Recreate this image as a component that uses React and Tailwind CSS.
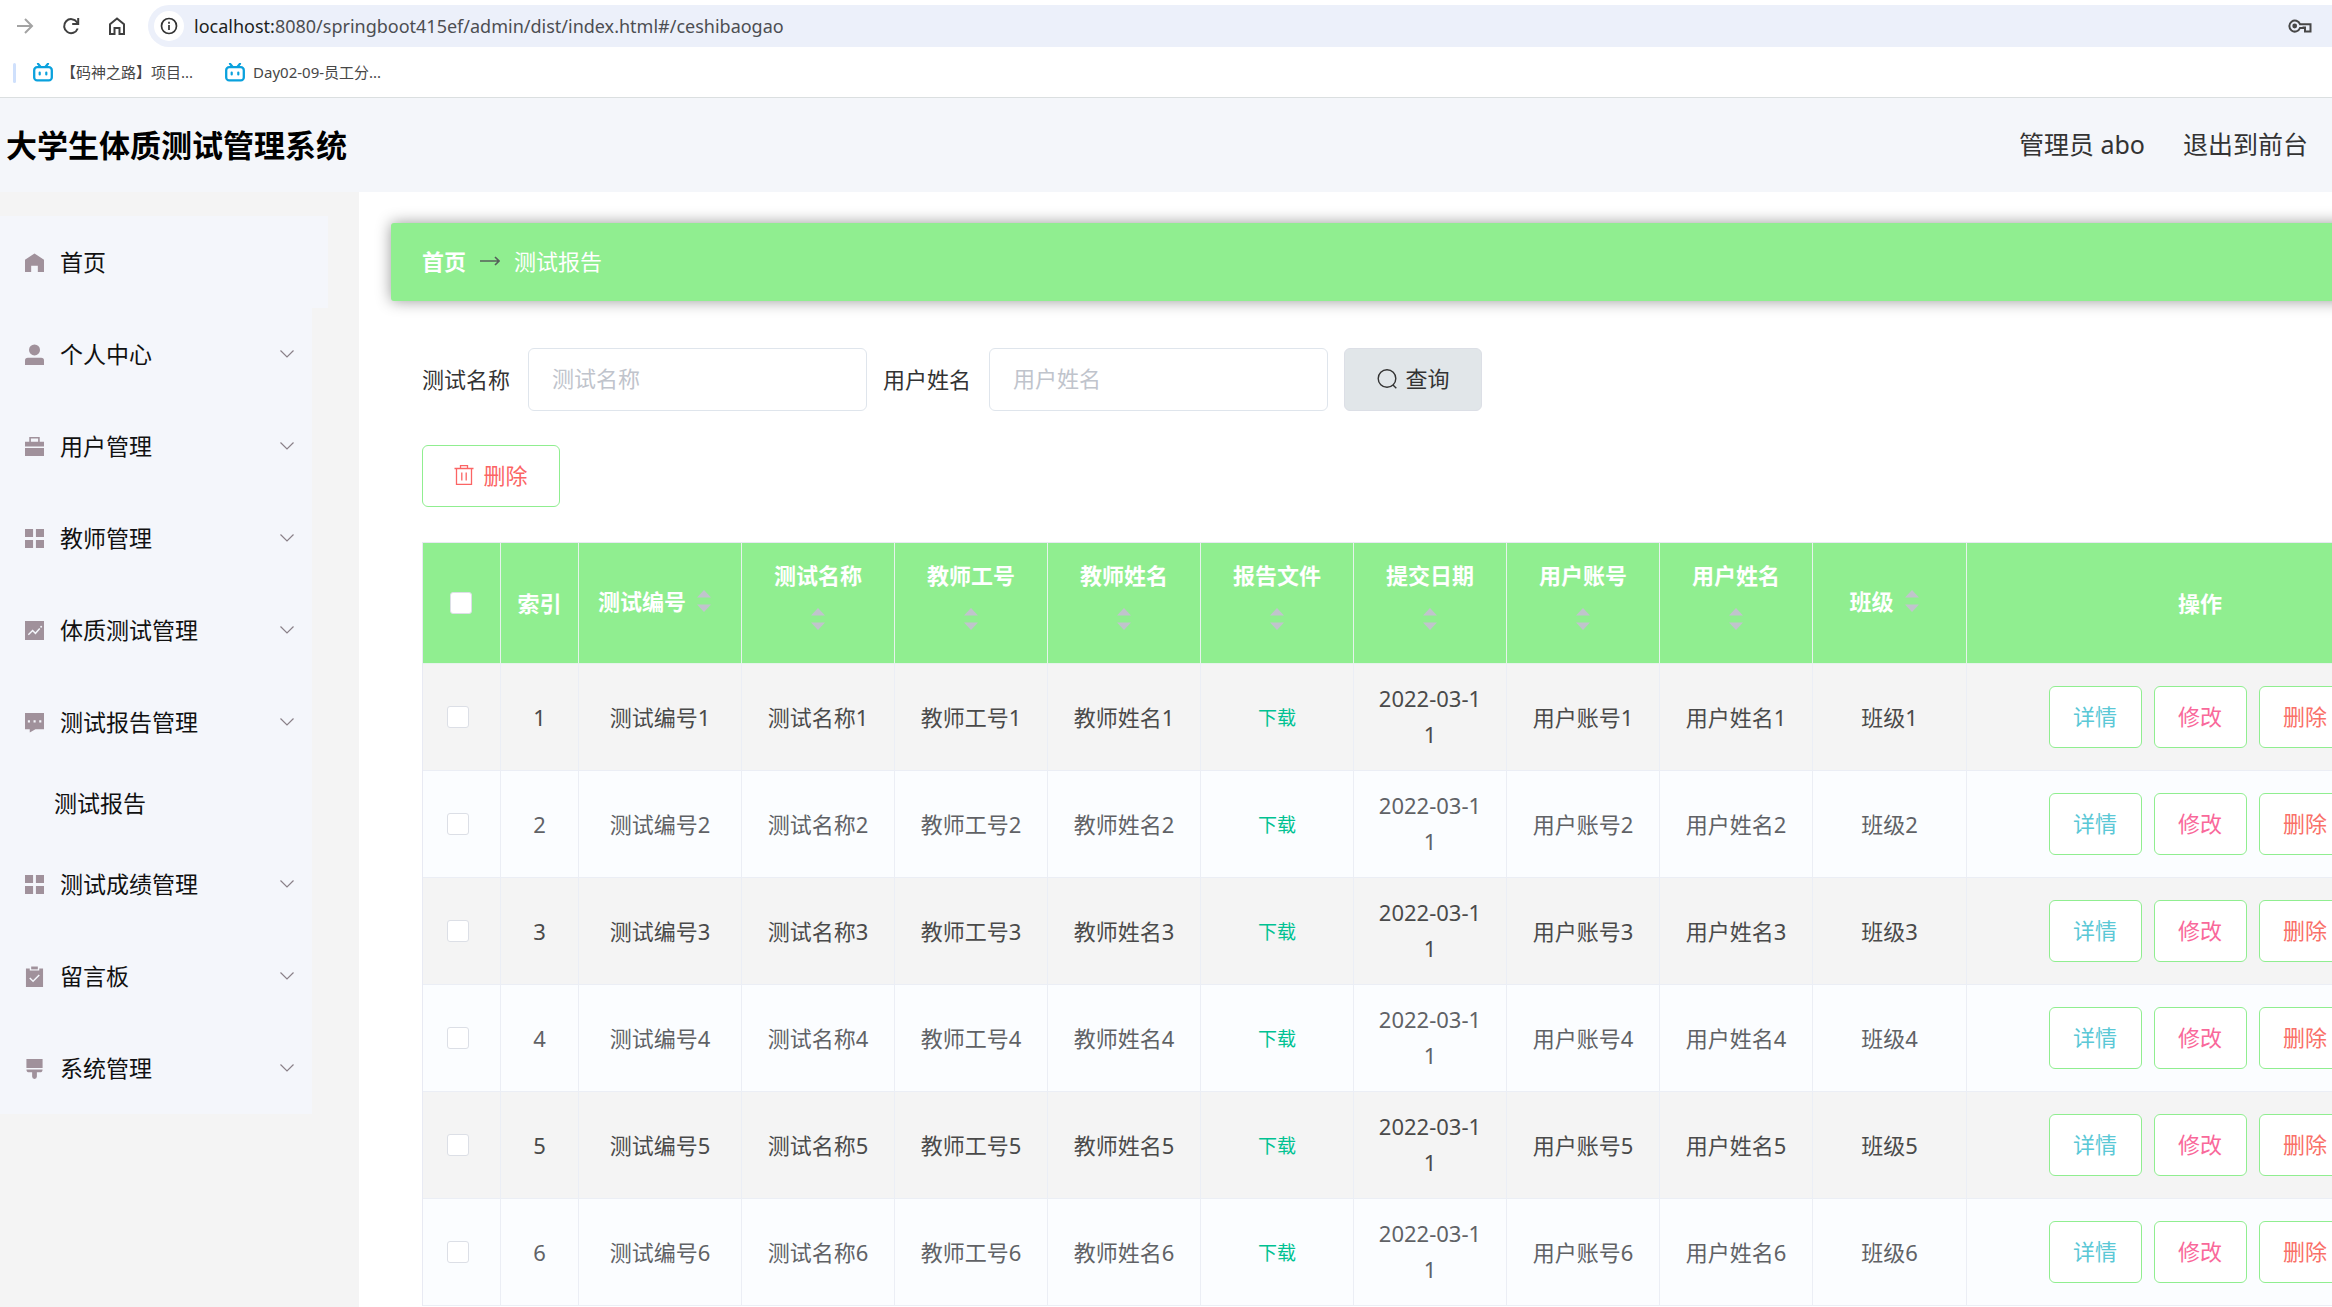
import { useState } from 'react'

const NAV = [
  { label: '个人中心',     icon: 'user' },
  { label: '用户管理',     icon: 'case' },
  { label: '教师管理',     icon: 'grid' },
  { label: '体质测试管理', icon: 'chart' },
  { label: '测试报告管理', icon: 'chat', children: ['测试报告'] },
  { label: '测试成绩管理', icon: 'grid' },
  { label: '留言板',       icon: 'board' },
  { label: '系统管理',     icon: 'brush' },
]

const COLUMNS = ['测试编号', '测试名称', '教师工号', '教师姓名', '报告文件', '提交日期', '用户账号', '用户姓名', '班级']
const ROWS    = [1, 2, 3, 4, 5, 6]

const ICONS = {
  home:  <path d="M10 .5 20 7v13h-6.5v-6.500h-7V20H0V7z" />,
  user:  <><circle cx="10" cy="5.200" r="5.800" /><path d="M0 21v-4.500Q0 13.500 3 13.500h14q3 0 3 3V21z" /></>,
  case:  <path fillRule="evenodd" d="M4.500 0h11v5H20v5H0V5h4.500zM6.200 1.700V5h7.600V1.700zM0 11.600h20V20H0z" />,
  grid:  <path d="M0 0h8.500v8.500H0zM11.500 0H20v8.500h-8.500zM0 11.500h8.500V20H0zM11.500 11.500H20V20h-8.500z" />,
  chart: (
    <>
      <path d="M0 0h20v20H0z" />
      <path d="M3.500 14.500 8 10l3 3 4.500-5" fill="none" stroke="#f4f6fb" strokeWidth="1.500" />
      <circle cx="17" cy="6" r="1" fill="#f4f6fb" />
    </>
  ),
  chat: (
    <>
      <path d="M0 0h20v17h-9l-6 3.500V17H0z" />
      <path d="M3 7.700h2.200v2.200H3zM9 7.700h2.200v2.200H9zM15 7.700h2.200v2.200H15z" fill="#f4f6fb" />
    </>
  ),
  board: (
    <>
      <path d="M1 1.500h4v2.200h10V1.500h4V21H1z" />
      <path d="M6.500-.5h7v3h-7z" />
      <path d="m5 11.500 3.500 3.500 6.500-6.500" fill="none" stroke="#f4f6fb" strokeWidth="1.600" />
    </>
  ),
  brush: <path d="M1.500 0h17v9.500h-17zM1.500 11h17q0 3-3 3h-3v4.500q0 2.500-2.500 2.500t-2.500-2.500V14h-3q-3 0-3-3z" />,
}

function NavIcon({ name }) {
  return (
    <svg viewBox="0 0 20 20" className="size-[19px] shrink-0 overflow-visible" fill="#a0919b">
      {ICONS[name]}
    </svg>
  )
}

function Chevron() {
  return (
    <svg viewBox="0 0 16 10" className="h-[10px] w-4" fill="none" stroke="#8a8088" strokeWidth="1.200">
      <path d="m1.500 1.500 6.500 6.500 6.500-6.500" />
    </svg>
  )
}

function BiliIcon() {
  return (
    <svg viewBox="0 0 20 19" className="h-[19px] w-5 shrink-0" fill="none" stroke="#0aa1dd">
      <rect x="1.200" y="4.200" width="17.600" height="13.200" rx="3" strokeWidth="2.300" />
      <path d="m5 .8 2.500 3M15 .8l-2.500 3" strokeWidth="2.200" strokeLinecap="round" />
      <path d="M6.700 9.500v2M13.300 9.500v2" strokeWidth="2.200" strokeLinecap="round" />
    </svg>
  )
}

function BrowserBar() {
  return (
    <div className="border-b border-[#dbdfe0] bg-white">
      <div className="flex h-[52px] items-center pl-4">
        <button aria-label="前进" className="mr-7">
          <svg viewBox="0 0 18 18" className="size-[18px]" fill="none" stroke="#a3a3a3" strokeWidth="2">
            <path d="M1 9h15M9 2l7 7-7 7" />
          </svg>
        </button>
        <button aria-label="重新加载" className="mr-7">
          <svg viewBox="0 0 18 18" className="size-[18px]" fill="none" stroke="#3f3f3f" strokeWidth="2">
            <path d="M15.700 11.500A7 7 0 1 1 15 5.300l1 1.200" />
            <path d="M16.200 1v6h-6" />
          </svg>
        </button>
        <button aria-label="主页" className="mr-[22px]">
          <svg viewBox="0 0 18 18" className="size-[18px]" fill="none" stroke="#3f3f3f" strokeWidth="2">
            <path d="M2 7.200 9 1.500l7 5.700V17h-4.500v-6h-5v6H2z" />
          </svg>
        </button>
        <div className="flex h-[42px] flex-1 items-center rounded-l-full bg-[#ecf0fa] pr-5 pl-[6px]">
          <span className="mr-[10px] flex size-[30px] items-center justify-center rounded-full bg-white">
            <svg viewBox="0 0 18 18" className="size-[18px]" fill="none" stroke="#333" strokeWidth="1.700">
              <circle cx="9" cy="9" r="7.500" />
              <path d="M9 8v5M9 4.800v1.900" />
            </svg>
          </span>
          <span className="flex-1 text-[18px] text-[#4c4e52]">
            <span className="text-[#1d1e20]">localhost:</span>8080/springboot415ef/admin/dist/index.html#/ceshibaogao
          </span>
          <svg viewBox="0 0 24 14" className="h-[14px] w-6" fill="none" stroke="#474747" strokeWidth="2">
            <path d="M12 5.200A5.500 5.500 0 1 0 12 9h3.500v-.5h1.500v4h5.500V5.200z" />
            <circle cx="6.700" cy="7" r="2.400" fill="#474747" stroke="none" />
          </svg>
        </div>
      </div>
      <div className="flex h-[45px] items-center pb-1 pl-[13px] text-[15px] text-[#474747]">
        <span className="mr-[17px] h-5 w-[3px] rounded bg-[#cfe0fc]" />
        <a href="#bookmark-1" className="mr-8 flex items-center gap-2"><BiliIcon />【码神之路】项目...</a>
        <a href="#bookmark-2" className="flex items-center gap-2"><BiliIcon />Day02-09-员工分...</a>
      </div>
    </div>
  )
}

function Sidebar() {
  return (
    <aside className="w-[359px] shrink-0 bg-[#f4f4f4] pt-6 text-[23px] text-[#111]">
      <a href="#/" className="flex h-[92px] w-[328px] items-center gap-4 bg-[#f4f6fb] pl-[25px]">
        <NavIcon name="home" />首页
      </a>
      <nav className="w-[312px] bg-[#f4f6fb]">
        {NAV.map(item => (
          <div key={item.label}>
            <button className="flex h-[92px] w-full items-center gap-4 pr-[17px] pl-[25px]">
              <NavIcon name={item.icon} />
              <span className="flex-1 text-left">{item.label}</span>
              <Chevron />
            </button>
            {item.children?.map(child => (
              <a key={child} href="#/ceshibaogao" className="flex h-[70px] items-center pl-[54px]">{child}</a>
            ))}
          </div>
        ))}
      </nav>
    </aside>
  )
}

function SearchField({ id, label, value, onChange }) {
  return (
    <div className="flex items-center gap-[18px]">
      <label htmlFor={id} className="text-[#333]">{label}</label>
      <input
        id={id}
        value={value}
        onChange={e => onChange(e.target.value)}
        placeholder={label}
        className="h-[63px] w-[339px] rounded-md border border-[#dfe5ec] bg-white px-[23px] pb-1
                   outline-none placeholder:text-[#c0c4cc]"
      />
    </div>
  )
}

function SortCaret() {
  return (
    <span className="flex h-[51px] w-9 items-center justify-center">
      <svg viewBox="0 0 14 22" className="h-[22px] w-[14px]" fill="#c0c4cc">
        <path d="M7 0l7 7.500H0zM7 22l7-7.500H0z" />
      </svg>
    </span>
  )
}

function Checkbox({ label, checked, onChange }) {
  return (
    <input
      type="checkbox"
      aria-label={label}
      checked={checked}
      onChange={onChange}
      className="block size-[22px] appearance-none rounded-[3px] border border-[#dcdfe6] bg-white
                 checked:bg-[#90ee90]"
    />
  )
}

const actionClass = 'h-[62px] w-[93px] rounded-md border border-[#90ee90] bg-white pb-0.5'

function ReportTable() {
  const [selected, setSelected] = useState([])

  const toggle    = id => setSelected(s => s.includes(id) ? s.filter(x => x !== id) : [...s, id])
  const toggleAll = () => setSelected(s => s.length === ROWS.length ? [] : ROWS)

  return (
    <table className="w-full table-fixed border-separate border-spacing-0 border-t border-l border-[#e8eaf3] text-center
                      [&_td]:border-r [&_td]:border-b [&_td]:border-[#ebeef5]
                      [&_th]:border-r [&_th]:border-b [&_th]:border-[#e6f3ec]">
      <colgroup>
        <col className="w-[78px]" />
        <col className="w-[78px]" />
        <col className="w-[163px]" />
        <col span={7} className="w-[153px]" />
        <col className="w-[154px]" />
        <col />
      </colgroup>
      <thead className="bg-[#90ee90] text-white">
        <tr className="h-[121px]">
          <th>
            <div className="flex justify-center pr-0.5">
              <Checkbox label="全选" checked={selected.length === ROWS.length} onChange={toggleAll} />
            </div>
          </th>
          <th>索引</th>
          {COLUMNS.map(col => (
            <th key={col}>
              <div className="flex flex-wrap items-center justify-center px-[14px] pb-1">
                <span className="leading-[35px]">{col}</span>
                <SortCaret />
              </div>
            </th>
          ))}
          <th>操作</th>
        </tr>
      </thead>
      <tbody>
        {ROWS.map(n => (
          <tr key={n} className="h-[107px] bg-[#fbfdff] text-[#606266] odd:bg-[#f4f4f4] odd:text-[#4a4a4a]">
            <td>
              <div className="flex justify-center pr-2">
                <Checkbox label={`选择第${n}行`} checked={selected.includes(n)} onChange={() => toggle(n)} />
              </div>
            </td>
            <td>{n}</td>
            <td>测试编号{n}</td>
            <td>测试名称{n}</td>
            <td>教师工号{n}</td>
            <td>教师姓名{n}</td>
            <td><button className="pb-0.5 text-[19px] text-[#00c292]">下载</button></td>
            <td className="px-5 pb-0.5 leading-9 break-all">2022-03-11</td>
            <td>用户账号{n}</td>
            <td>用户姓名{n}</td>
            <td>班级{n}</td>
            <td>
              <div className="flex justify-center gap-3">
                <button className={`${actionClass} text-[#5bc8d6]`}>详情</button>
                <button className={`${actionClass} text-[#f9689a]`}>修改</button>
                <button className={`${actionClass} text-[#f97068]`}>删除</button>
              </div>
            </td>
          </tr>
        ))}
      </tbody>
    </table>
  )
}

export default function App() {
  const [testName, setTestName] = useState('')
  const [userName, setUserName] = useState('')

  return (
    <div className="flex h-screen flex-col overflow-hidden bg-white font-['Noto_Sans','Noto_Sans_CJK_SC',sans-serif]">
      <BrowserBar />

      <header className="flex h-[94px] shrink-0 items-center justify-between bg-[#f4f6fa] pr-6 pl-[6px]">
        <h1 className="text-[31px] font-bold text-black">大学生体质测试管理系统</h1>
        <div className="flex gap-[38px] text-[25px] text-[#333]">
          <span>管理员 abo</span>
          <a href="#/front">退出到前台</a>
        </div>
      </header>

      <div className="flex min-h-0 flex-1">
        <Sidebar />

        {/* The table is wider than the window and is cut off on the right */}
        <main className="min-w-0 flex-1 overflow-hidden">
          <div className="min-w-[2138px] px-8 pt-[31px] text-[22px]">
            <div className="flex h-[78px] items-center rounded-[3px] bg-[#90ee90] px-[31px] pb-0.5 text-white shadow-[0_0_15px_#999]">
              <a href="#/" className="font-bold">首页</a>
              <svg viewBox="0 0 20 10" className="mx-[14px] h-[10px] w-5" fill="none" stroke="#55605a" strokeWidth="1.600">
                <path d="M0 5h19M15 1l4 4-4 4" />
              </svg>
              <span>测试报告</span>
            </div>

            <div className="px-[31px]">
              <form className="mt-[47px] flex items-center gap-4" onSubmit={e => e.preventDefault()}>
                <SearchField id="test-name" label="测试名称" value={testName} onChange={setTestName} />
                <SearchField id="user-name" label="用户姓名" value={userName} onChange={setUserName} />
                <button className="flex h-[63px] w-[138px] items-center justify-center gap-[9px] rounded-md
                                   border border-[#dcdfe6] bg-[#e1e6e9] pb-0.5 text-[#333]">
                  <svg viewBox="0 0 20 20" className="size-5" fill="none" stroke="#333" strokeWidth="1.400">
                    <circle cx="10" cy="9.500" r="8.800" />
                    <path d="m16 16 3.300 3.300" />
                  </svg>
                  查询
                </button>
              </form>

              <button className="mt-[34px] flex h-[62px] w-[138px] items-center justify-center gap-[9px] rounded-md
                                 border border-[#90ee90] bg-white pb-0.5 text-[#fb6464]">
                <svg viewBox="0 0 20 20" className="size-5" fill="none" stroke="#fb6464" strokeWidth="1.300">
                  <path d="M.5 3.500h19M2.500 3.500v15.800h15V3.500M6.500 3.500V.7h7v2.800M7.800 7.500v8M12.200 7.500v8" />
                </svg>
                删除
              </button>

              <div className="mt-[35px]">
                <ReportTable />
              </div>
            </div>
          </div>
        </main>
      </div>
    </div>
  )
}
